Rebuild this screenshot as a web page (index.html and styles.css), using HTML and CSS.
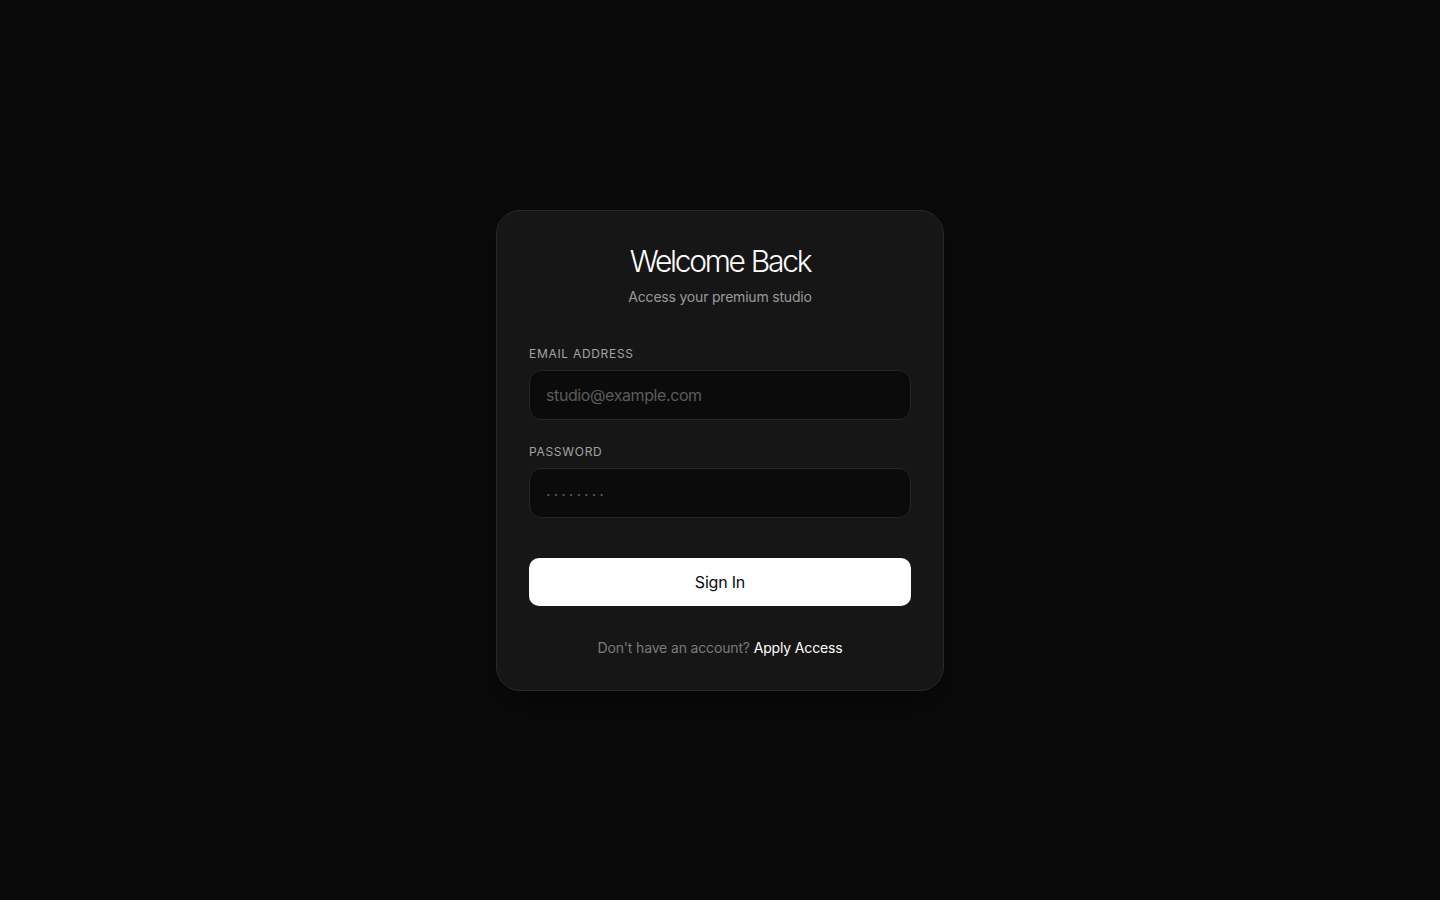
FILE: index.html
```html
<!DOCTYPE html>
<html lang="en">
<head>
<meta charset="utf-8">
<title>Welcome Back</title>
<link rel="stylesheet" href="styles.css">
</head>
<body>
<main class="page">
  <form class="card">
    <h1 class="title">Welcome Back</h1>
    <p class="subtitle">Access your premium studio</p>
    <div class="field">
      <label class="label" for="email">Email Address</label>
      <input class="input" id="email" type="email" placeholder="studio@example.com">
    </div>
    <div class="field field-second">
      <label class="label" for="password">Password</label>
      <input class="input input-pass" id="password" type="password" placeholder="········">
    </div>
    <button class="btn" type="button">Sign In</button>
    <p class="footer">Don't have an account? <a class="link" href="#">Apply Access</a></p>
  </form>
</main>
</body>
</html>
```

FILE: styles.css
```css
* { box-sizing: border-box; }
html, body { margin: 0; padding: 0; }
body {
  background: #0a0a0a;
  font-family: Inter, "Noto Sans", sans-serif;
  color: #fff;
  height: 900px;
}
.page {
  height: 900px;
  display: flex;
  align-items: center;
  justify-content: center;
}
.card {
  width: 448px;
  background: #161616;
  border: 1px solid #282828;
  border-radius: 24px;
  padding: 32px;
  display: flex;
  flex-direction: column;
  box-shadow: 0 16px 32px rgba(0,0,0,0.35);
}
.title {
  margin: 0;
  font-size: 30px;
  line-height: 36px;
  font-weight: 300;
  text-align: center;
  letter-spacing: -2.3px;
  word-spacing: 1px;
  color: #fff;
}
.subtitle {
  margin: 8px 0 0;
  font-size: 14px;
  line-height: 20px;
  color: #9a9a9a;
  text-align: center;
  letter-spacing: -0.2px;
}
.field {
  display: flex;
  flex-direction: column;
  gap: 8px;
  margin-top: 39px;
}
.field-second { margin-top: 24px; }
.label {
  font-size: 12px;
  line-height: 16px;
  text-transform: uppercase;
  letter-spacing: 0.7px;
  color: #a3a3a3;
  font-weight: 400;
}
.input {
  height: 50px;
  width: 100%;
  background: #0b0b0b;
  border: 1px solid #262626;
  border-radius: 12px;
  padding: 0 16px;
  font-family: Inter, "Noto Sans", sans-serif;
  font-size: 16px;
  letter-spacing: -0.4px;
  color: #fff;
  outline: none;
}
.input::placeholder { color: #5c5c5c; }
.input-pass { letter-spacing: 3px; padding-top: 4px; }
.btn {
  margin-top: 40px;
  height: 48px;
  width: 100%;
  border: none;
  border-radius: 10px;
  background: #fff;
  color: #0a0a0a;
  font-family: Inter, "Noto Sans", sans-serif;
  font-size: 16px;
  font-weight: 400;
  letter-spacing: -0.2px;
  cursor: pointer;
}
.footer {
  margin: 32px 0 0;
  font-size: 14px;
  line-height: 20px;
  text-align: center;
  color: #7a7a7a;
  letter-spacing: -0.15px;
}
.link {
  color: #fff;
  text-decoration: none;
}
```
